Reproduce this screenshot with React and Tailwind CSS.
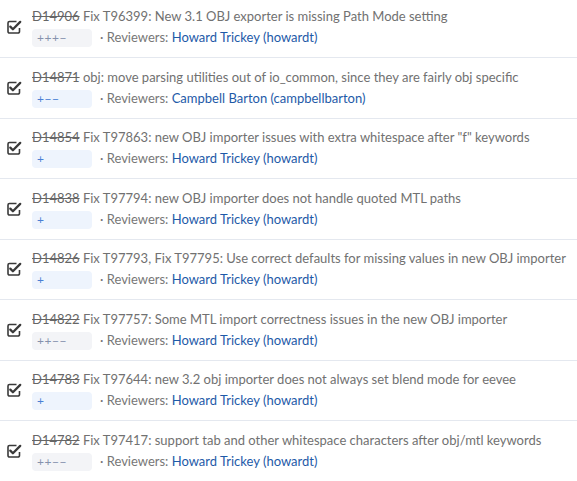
import React from 'react';

const revisions = [
  { id: 'D14906', title: 'Fix T96399: New 3.1 OBJ exporter is missing Path Mode setting', diff: '+++−', tone: 'gray', reviewer: 'Howard Trickey (howardt)' },
  { id: 'D14871', title: 'obj: move parsing utilities out of io_common, since they are fairly obj specific', diff: '+−−', tone: 'blue', reviewer: 'Campbell Barton (campbellbarton)' },
  { id: 'D14854', title: 'Fix T97863: new OBJ importer issues with extra whitespace after "f" keywords', diff: '+', tone: 'blue', reviewer: 'Howard Trickey (howardt)' },
  { id: 'D14838', title: 'Fix T97794: new OBJ importer does not handle quoted MTL paths', diff: '+', tone: 'blue', reviewer: 'Howard Trickey (howardt)' },
  { id: 'D14826', title: 'Fix T97793, Fix T97795: Use correct defaults for missing values in new OBJ importer', diff: '+', tone: 'blue', reviewer: 'Howard Trickey (howardt)' },
  { id: 'D14822', title: 'Fix T97757: Some MTL import correctness issues in the new OBJ importer', diff: '++−−', tone: 'gray', reviewer: 'Howard Trickey (howardt)' },
  { id: 'D14783', title: 'Fix T97644: new 3.2 obj importer does not always set blend mode for eevee', diff: '+', tone: 'blue', reviewer: 'Howard Trickey (howardt)' },
  { id: 'D14782', title: 'Fix T97417: support tab and other whitespace characters after obj/mtl keywords', diff: '++−−', tone: 'gray', reviewer: 'Howard Trickey (howardt)' },
];

function CheckIcon() {
  return (
    <svg width="16" height="16" viewBox="0 0 16 16" className="flex-shrink-0">
      <path
        d="M10.5 2.5H3.5a1.5 1.5 0 0 0-1.5 1.5v8.5a1.5 1.5 0 0 0 1.5 1.5h8.5a1.5 1.5 0 0 0 1.5-1.5V9"
        fill="none"
        stroke="#3a3a3a"
        strokeWidth="1.6"
      />
      <path d="M4.3 7.6l2.6 2.6 7.3-7.3" fill="none" stroke="#3a3a3a" strokeWidth="2.3" strokeLinecap="round" strokeLinejoin="round" />
    </svg>
  );
}

function Row({ rev }) {
  const badge =
    rev.tone === 'blue'
      ? 'bg-[#eef4fd] text-[#4a7fd4]'
      : 'bg-[#f3f4f7] text-[#8591ad]';
  return (
    <div className="h-[60.5px] flex items-center border-b border-[#e4e8ef] pl-[6px]">
      <CheckIcon />
      <div className="ml-[10px] flex flex-col self-start pt-[8.5px]">
        <div className="h-[20px] leading-[20px] text-[13px] text-[#717171] whitespace-nowrap">
          <span className="line-through text-[#666]">{rev.id}</span> {rev.title}
        </div>
        <div className="mt-[3px] flex items-center h-[18px]">
          <span className={`w-[60px] h-[18px] rounded-[4px] pl-[5px] text-[12px] leading-[18px] tracking-[0.5px] ${badge}`}>
            {rev.diff}
          </span>
          <span className="ml-[8px] text-[13px] text-[#777]">
            · Reviewers: <span className="text-[#1e5aa8]">{rev.reviewer}</span>
          </span>
        </div>
      </div>
    </div>
  );
}

export default function App() {
  return (
    <div className="w-[577px] h-[481px] overflow-hidden bg-white font-['Lato',sans-serif]">
      <div className="-mt-[2.5px]">
        {revisions.map((rev) => (
          <Row key={rev.id} rev={rev} />
        ))}
      </div>
    </div>
  );
}
